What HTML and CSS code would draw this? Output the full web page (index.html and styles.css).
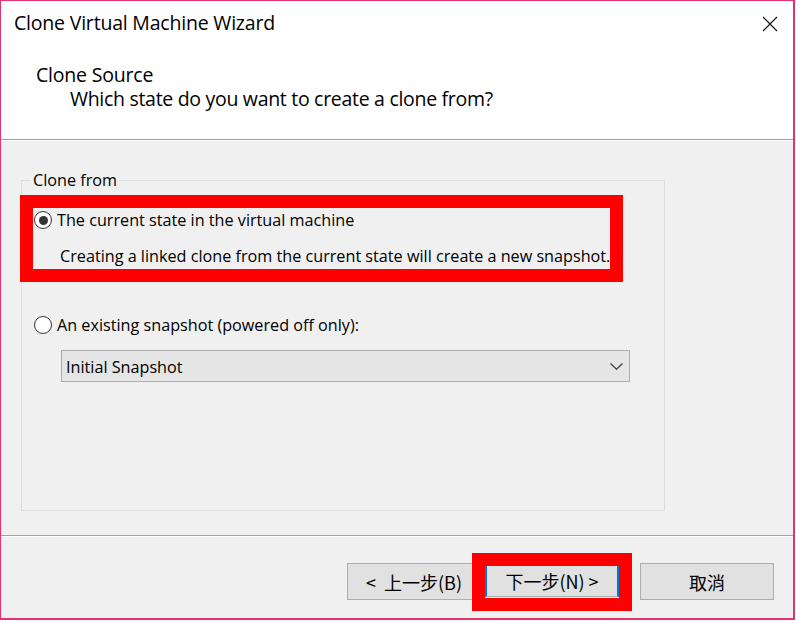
FILE: index.html
```html
<!DOCTYPE html>
<html lang="en">
<head>
<meta charset="utf-8">
<title>Clone Virtual Machine Wizard</title>
<link rel="stylesheet" href="styles.css">
</head>
<body>
<div class="window">
  <div class="titlebar">
    <span class="title">Clone Virtual Machine Wizard</span>
    <svg class="close" width="16" height="16" viewBox="0 0 16 16" aria-label="Close">
      <path d="M1 1 L15 15 M15 1 L1 15" stroke="#1a1a1a" stroke-width="1.3" fill="none"/>
    </svg>
  </div>
  <div class="header">
    <div class="h-title">Clone Source</div>
    <div class="h-sub">Which state do you want to create a clone from?</div>
  </div>
  <div class="content">
    <fieldset class="group">
      <legend>Clone from</legend>
      <div class="option">
        <span class="radio checked"></span>
        <span class="opt-label">The current state in the virtual machine</span>
      </div>
      <div class="desc">Creating a linked clone from the current state will create a new snapshot.</div>
      <div class="option second">
        <span class="radio"></span>
        <span class="opt-label">An existing snapshot (powered off only):</span>
      </div>
      <div class="select">
        <span>Initial Snapshot</span>
        <svg class="chevron" width="13" height="7" viewBox="0 0 13 7">
          <path d="M0.5 0.5 L6.5 6.2 L12.5 0.5" stroke="#404040" stroke-width="1.3" fill="none"/>
        </svg>
      </div>
    </fieldset>
  </div>
  <div class="footer">
    <button class="btn">&lt;&nbsp; 上一步(B)</button>
    <button class="btn default">下一步(N) &gt;</button>
    <button class="btn cancel">取消</button>
  </div>
  <div class="mark mark-option"></div>
  <div class="mark mark-next"></div>
</div>
</body>
</html>
```

FILE: styles.css
```css
html, body {
  margin: 0;
  padding: 0;
  background: #ffffff;
}

body {
  font-family: "Open Sans", "Noto Sans CJK TC", sans-serif;
  color: #000;
}

.window {
  position: relative;
  box-sizing: border-box;
  width: 795px;
  height: 620px;
  border-style: solid;
  border-color: #e4336a;
  border-width: 1px 2px 2px 1px;
  display: flex;
  flex-direction: column;
  background: #fff;
}

.titlebar {
  display: flex;
  justify-content: space-between;
  align-items: flex-start;
  padding: 9px 0 0 13px;
  height: 26px;
  box-sizing: content-box;
}

.title {
  font-size: 19.5px;
  line-height: 26px;
  letter-spacing: -0.2px;
}

.close {
  margin: 6px 15px 0 0;
}

.header {
  padding: 27px 0 28px 35px;
  border-bottom: 1px solid #a0a0a0;
  font-size: 19.5px;
  line-height: 24px;
  letter-spacing: -0.2px;
}

.h-sub {
  padding-left: 34px;
  letter-spacing: -0.3px;
}

.content {
  flex: 1;
  background: #f0f0f0;
  border-top: 1px solid #fff;
  padding: 29px 0 0 20px;
  font-size: 16.2px;
  line-height: 20px;
}

.group {
  box-sizing: border-box;
  width: 644px;
  margin: 0;
  border: 1px solid #dcdcdc;
  padding: 20px 0 128px 11px;
}

.group legend {
  padding: 0 2px;
  margin-left: -2px;
  font-size: 16.2px;
  line-height: 20px;
}

.option {
  display: flex;
  align-items: center;
  height: 20px;
}

.option.second {
  margin-top: 49px;
}

.radio {
  box-sizing: border-box;
  width: 18px;
  height: 18px;
  margin-left: 1px;
  margin-right: 5px;
  border: 1px solid #333;
  border-radius: 50%;
  background: #fff;
  display: flex;
  align-items: center;
  justify-content: center;
}

.radio.checked::after {
  content: "";
  width: 9px;
  height: 9px;
  border-radius: 50%;
  background: #333;
}

.desc {
  margin-top: 16px;
  padding-left: 27px;
}

.select {
  box-sizing: border-box;
  margin: 15px 0 0 28px;
  width: 569px;
  height: 32px;
  background: #e5e5e5;
  border: 1px solid #acacac;
  display: flex;
  align-items: center;
  justify-content: space-between;
  padding: 1px 6px 0 4px;
}

.footer {
  height: 83px;
  border-top: 1px solid #a0a0a0;
  box-shadow: inset 0 1px 0 #fff;
  background: #f0f0f0;
  display: flex;
  justify-content: flex-end;
  align-items: flex-start;
  padding: 27px 19px 0 0;
  box-sizing: border-box;
}

.btn {
  box-sizing: border-box;
  width: 134px;
  height: 37px;
  background: #e1e1e1;
  border: 1px solid #adadad;
  font-family: "Noto Sans CJK TC", "Open Sans", sans-serif;
  font-size: 18px;
  color: #000;
  padding: 0;
  margin: 0;
}

.btn.default {
  height: 32px;
  margin: 2px 0 0 4px;
  border-left: 2px solid #0078d7;
  border-right: 2px solid #0078d7;
}

.btn.cancel {
  margin-left: 21px;
}

.mark {
  position: absolute;
  box-sizing: border-box;
  border: 13px solid #ff0000;
}

.mark-option {
  left: 19px;
  top: 194px;
  width: 603px;
  height: 87px;
}

.mark-next {
  left: 471px;
  top: 552px;
  width: 160px;
  height: 58px;
}
```
